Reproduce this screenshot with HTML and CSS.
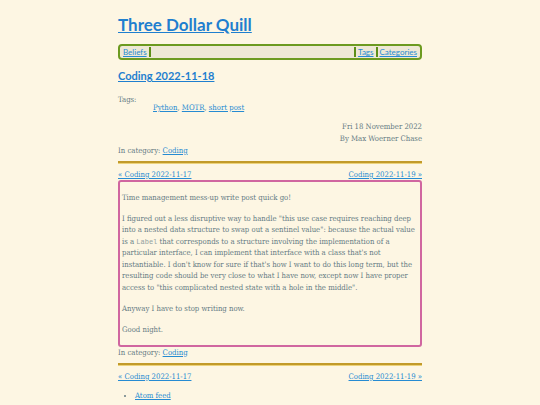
FILE: index.html
```html
<!DOCTYPE html>
<html>
<head>
<meta charset="utf-8">
<link rel="stylesheet" href="styles.css">
</head>
<body>
<div class="page">
  <header class="site-header">
    <h1 class="site-title"><a href="#">Three Dollar Quill</a></h1>
    <nav class="nav">
      <a class="nav-item" href="#">Beliefs</a>
      <span class="nav-spacer"></span>
      <a class="nav-item nav-sep" href="#">Tags</a>
      <a class="nav-item" href="#">Categories</a>
    </nav>
  </header>
  <main>
    <h2 class="post-title"><a href="#">Coding 2022-11-18</a></h2>
    <dl class="tags">
      <dt>Tags:</dt>
      <dd><a href="#">Python</a>, <a href="#">MOTR</a>, <a href="#">short post</a></dd>
    </dl>
    <div class="byline">
      <div>Fri 18 November 2022</div>
      <div>By Max Woerner Chase</div>
    </div>
    <div class="category">In category: <a href="#">Coding</a></div>
    <hr class="rule">
    <div class="pager"><a href="#">« Coding 2022-11-17</a><a href="#">Coding 2022-11-19 »</a></div>
    <article class="post-body">
      <p>Time management mess-up write post quick go!</p>
      <p>I figured out a less disruptive way to handle "this use case requires reaching deep into a nested data structure to swap out a sentinel value": because the actual value is a <code>Label</code> that corresponds to a structure involving the implementation of a particular interface, I can implement that interface with a class that's not instantiable. I don't know for sure if that's how I want to do this long term, but the resulting code should be very close to what I have now, except now I have proper access to "this complicated nested state with a hole in the middle".</p>
      <p>Anyway I have to stop writing now.</p>
      <p>Good night.</p>
    </article>
    <div class="category">In category: <a href="#">Coding</a></div>
    <hr class="rule">
    <div class="pager"><a href="#">« Coding 2022-11-17</a><a href="#">Coding 2022-11-19 »</a></div>
    <ul class="feeds">
      <li><a href="#">Atom feed</a></li>
    </ul>
  </main>
</div>
</body>
</html>
```

FILE: styles.css
```css
html, body {
  margin: 0;
  padding: 0;
  background: #fdf6e3;
}
body {
  color: #657b83;
  font-family: "DejaVu Serif Condensed", "DejaVu Serif", serif;
  font-stretch: condensed;
  font-size: 7.7px;
  line-height: 11.5px;
}
a {
  color: #268bd2;
}
.page {
  width: 304px;
  margin: 0 auto;
}
.site-title {
  margin: 0;
  padding-top: 14px;
  font-family: Lato, "Liberation Sans", sans-serif;
  font-weight: 700;
  font-size: 17px;
  line-height: 22px;
}
.site-title a {
  color: #1f7fcf;
}
.nav {
  margin-top: 8px;
  display: flex;
  align-items: center;
  height: 12px;
  border: 2px solid #6c9a20;
  border-radius: 4px;
  background: #eee8d5;
  padding: 0 1px;
  font-family: Lato, "Liberation Sans", sans-serif;
  font-size: 8px;
  line-height: 10px;
}
.nav-item {
  padding: 0 2px;
}
.nav-spacer {
  flex: 1;
  align-self: stretch;
  margin: 1px 0;
  border-left: 2px solid #5d8f17;
  border-right: 2px solid #5d8f17;
}
.nav-sep {
  border-right: 2px solid #5d8f17;
}
.post-title {
  margin: 8px 0 0;
  font-family: Lato, "Liberation Sans", sans-serif;
  font-weight: 700;
  font-size: 11px;
  line-height: 16px;
}
.post-title a {
  color: #1f7fcf;
}
.tags {
  margin: 12px 0 0;
  line-height: 8px;
}
.tags dt {
  margin: 0;
}
.tags dd {
  margin: 0 0 0 35px;
}
.byline {
  margin-top: 9px;
  text-align: right;
  line-height: 12px;
}
.category {
  line-height: 12px;
}
.rule {
  margin: 4px 0 0;
  border: 0;
  height: 0;
  border-top: 2px solid #c29a2a;
  border-bottom: 1px solid #ecd27a;
}
.pager {
  display: flex;
  justify-content: space-between;
  margin-top: 5px;
  line-height: 11px;
}
.post-body {
  margin-top: 0;
  border: 2px solid #d066a0;
  border-radius: 3px;
  padding: 0 4px 0 2px;
}
.post-body p {
  margin: 9.5px 0;
}
code {
  font-family: "Liberation Mono", monospace;
  font-size: 7px;
  line-height: 1;
  color: #93a1a1;
}
.feeds {
  margin: 8px 0 0;
  padding-left: 17px;
}
```
